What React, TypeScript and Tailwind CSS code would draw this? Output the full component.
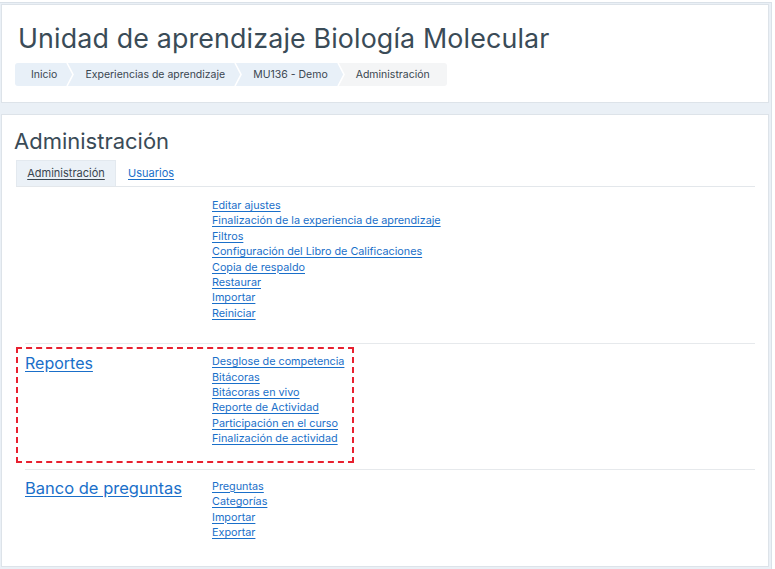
const settingsLinks = [
	"Editar ajustes",
	"Finalización de la experiencia de aprendizaje",
	"Filtros",
	"Configuración del Libro de Calificaciones",
	"Copia de respaldo",
	"Restaurar",
	"Importar",
	"Reiniciar",
];

const reportLinks = [
	"Desglose de competencia",
	"Bitácoras",
	"Bitácoras en vivo",
	"Reporte de Actividad",
	"Participación en el curso",
	"Finalización de actividad",
];

const bankLinks = ["Preguntas", "Categorías", "Importar", "Exportar"];

const crumbs = ["Inicio", "Experiencias de aprendizaje", "MU136 - Demo", "Administración"];

function Chevron({ left, right }: { left: string; right: string }) {
	return (
		<svg width="10" height="23" viewBox="0 0 10 23" className="shrink-0 block">
			<polygon points="0,0 2,0 8,11.5 2,23 0,23" fill={left} />
			<polygon points="2,0 10,0 10,23 2,23 8,11.5" fill={right} />
			<polyline points="2,0 8,11.5 2,23" fill="none" stroke="#ffffff" strokeWidth="1.6" />
		</svg>
	);
}

function LinkList({ items }: { items: string[] }) {
	return (
		<ul className="flex flex-col">
			{items.map((item) => (
				<li key={item} className="text-[10.8px] leading-[15.4px] whitespace-nowrap">
					<a href="#" className="text-[#1a6fc9] underline underline-offset-2">
						{item}
					</a>
				</li>
			))}
		</ul>
	);
}

export default function App() {
	return (
		<div
			className="w-[775px] h-[569px] bg-white pt-[2px] overflow-hidden"
			style={{ fontFamily: "Inter, 'Open Sans', sans-serif" }}
		>
			<div className="w-[772px] h-[567px] bg-[#eaf0f6] border-t border-r border-[#dae1e8] pt-[1px] flex flex-col gap-[11px]">
				{/* header card */}
				<div className="ml-[1px] w-[768px] h-[99px] bg-white border border-[#dde3e9] pl-[16px] pr-4 pt-[16px]">
					<h1 className="text-[26.8px] leading-[34px] text-[#3a4b57] tracking-[0.15px]">
						Unidad de aprendizaje Biología Molecular
					</h1>
					<nav className="mt-[8px] -ml-[3px] flex h-[23px] w-fit items-stretch rounded-[3px] overflow-hidden text-[10.5px] text-[#3a4650] whitespace-nowrap">
						{crumbs.map((c, i) => {
							const last = i === crumbs.length - 1;
							const bg = last ? "#f4f5f6" : "#e8f0f8";
							return (
								<div key={c} className="flex items-stretch">
									{i > 0 && <Chevron left="#e8f0f8" right={bg} />}
									<span
										className={
											last
												? "flex items-center pl-[10px] pr-[17px] bg-[#f4f5f6]"
												: "flex items-center bg-[#e8f0f8] " +
												  (i === 0 ? "pl-4 pr-[8px]" : "pl-[10px] pr-[8px]")
										}
									>
										{c}
									</span>
								</div>
							);
						})}
					</nav>
				</div>

				{/* main card */}
				<div className="ml-[1px] w-[768px] flex-1 mb-[2px] bg-white border border-[#dde3e9] pt-[11px] pr-[13px]">
					<h2 className="pl-[12px] text-[22px] leading-[30px] text-[#3a4b57]">Administración</h2>
					<div className="ml-[14px] mt-[4px] flex items-end border-b border-[#e3e7eb] text-[11px]">
						<div className="h-[26px] w-[100px] flex items-center justify-center bg-[#ebf1f7] border border-b-0 border-[#e3e9ef]">
							<span className="text-[#3a4650] underline underline-offset-2">Administración</span>
						</div>
						<a href="#" className="h-[26px] flex items-center pl-[12px] text-[#1a6fc9] underline underline-offset-2">
							Usuarios
						</a>
					</div>

					<div className="pl-[23px]">
						<div className="flex pt-[11px] pb-[22px]">
							<div className="w-[187px]" />
							<LinkList items={settingsLinks} />
						</div>

						<div className="relative flex border-t border-[#e6e9ec] pt-[10px] pb-[22px]">
							<div className="w-[187px] text-[16px] leading-[18px]">
								<a href="#" className="text-[#1a6fc9] underline underline-offset-2">
									Reportes
								</a>
							</div>
							<LinkList items={reportLinks} />
							<div className="absolute left-[-9px] top-[3px] w-[338px] h-[116px] border-2 border-dashed border-[#e8202f]" />
						</div>

						<div className="flex border-t border-[#e6e9ec] pt-[9px]">
							<div className="w-[187px] text-[16.5px] leading-[18px]">
								<a href="#" className="text-[#1a6fc9] underline underline-offset-2">
									Banco de preguntas
								</a>
							</div>
							<LinkList items={bankLinks} />
						</div>
					</div>
				</div>
			</div>
		</div>
	);
}
